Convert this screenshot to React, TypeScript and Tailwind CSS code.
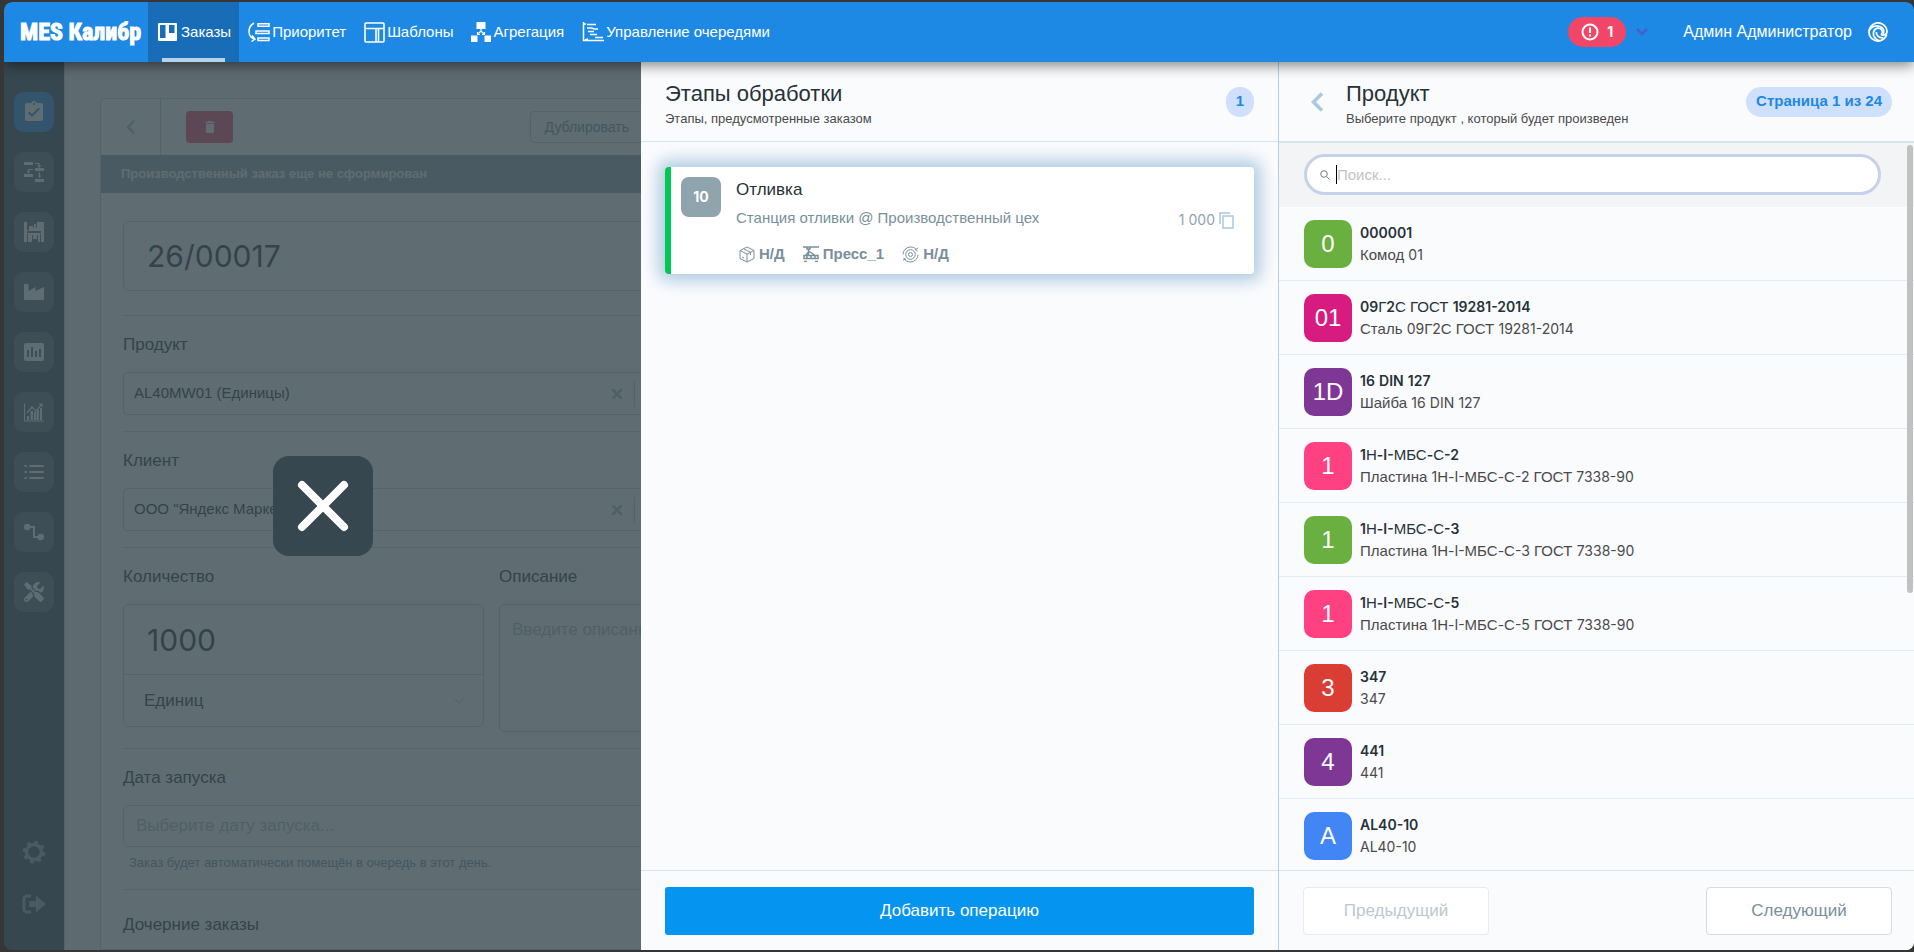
import type { ReactNode } from 'react';
import { FaTools } from 'react-icons/fa';
import { MdAssignmentTurnedIn, MdDelete } from 'react-icons/md';

const products = [
  { initials: '0', color: 'bg-[#69b040]', code: '000001', name: 'Комод 01' },
  { initials: '01', color: 'bg-[#d81b80]', code: '09Г2С ГОСТ 19281-2014', name: 'Сталь 09Г2С ГОСТ 19281-2014' },
  { initials: '1D', color: 'bg-[#7e3794]', code: '16 DIN 127', name: 'Шайба 16 DIN 127' },
  { initials: '1', color: 'bg-[#ff4081]', code: '1Н-I-МБС-С-2', name: 'Пластина 1Н-I-МБС-С-2 ГОСТ 7338-90' },
  { initials: '1', color: 'bg-[#69b040]', code: '1Н-I-МБС-С-3', name: 'Пластина 1Н-I-МБС-С-3 ГОСТ 7338-90' },
  { initials: '1', color: 'bg-[#ff4081]', code: '1Н-I-МБС-С-5', name: 'Пластина 1Н-I-МБС-С-5 ГОСТ 7338-90' },
  { initials: '3', color: 'bg-[#d93d33]', code: '347', name: '347' },
  { initials: '4', color: 'bg-[#7e3794]', code: '441', name: '441' },
  { initials: 'A', color: 'bg-[#4285f4]', code: 'AL40-10', name: 'AL40-10' }
];

const navItems = [
  {
    name: 'Приоритет',
    icon: (
      <svg viewBox="0 0 22 20" className="w-[22px] h-5" fill="none" stroke="currentColor" strokeWidth="1.5">
        <path d="M6 1C2.500 3 1 6 1 9c0 4 2 7 5.500 8M4 13.500 7 17l-3.500 2.500M10 1.800h11v2.400H10zM8 9h13v2.500H8zM10 16h11v2.500H10z" />
      </svg>
    )
  },
  {
    name: 'Шаблоны',
    icon: (
      <svg viewBox="0 0 21 21" className="w-[21px] h-[21px]" fill="none" stroke="currentColor" strokeWidth="1.600">
        <rect x="1" y="1" width="19" height="19" rx="1" />
        <path d="M1 6.500h19M12 6.500v13.500M14.500 6.500v13.500" />
      </svg>
    )
  },
  {
    name: 'Агрегация',
    icon: (
      <svg viewBox="0 0 20 20" className="w-5 h-5" fill="currentColor">
        <path d="M5.500 0h9v7h-9zM0 13.500h6.500V20H0zM13.500 13.500H20V20h-6.500z" />
        <path d="M10 7v2.500M10 9l-3.500 3.500M10 9l3.500 3.500M6.500 10v2.500H9M13.500 10v2.500H11" fill="none" stroke="currentColor" strokeWidth="1.200" />
      </svg>
    )
  },
  {
    name: 'Управление очередями',
    icon: (
      <svg viewBox="0 0 22 20" className="w-[22px] h-5" fill="none" stroke="currentColor" strokeWidth="1.500">
        <path d="M1.500 0v18.500H22M1.500 2H4M5 2.500h9M5 6h5M10 6l2 1h4M6 9.500h6M8 12.500h7M13 15.500h8M3 18l3-1" />
      </svg>
    )
  }
];

const sideItems = [
  { name: 'Заказы', icon: <MdAssignmentTurnedIn className="w-6 h-6" /> },
  {
    name: 'Процессы',
    icon: (
      <svg viewBox="0 0 20 20" className="w-5 h-5" fill="currentColor">
        <path d="M0 0h9v3H0zM11 6h9v3h-9zM0 12h9v3H0zM11 17h9v3h-9z" />
        <path d="M11 1.500h4v3M9 7.500H4.500V11M15.500 10v5" fill="none" stroke="currentColor" strokeWidth="1.200" />
        <path d="M13 3.500h4.500L15.200 6zM2.500 9.500h4L4.500 11.500zM13.500 13.500h4l-2 2.500z" />
      </svg>
    )
  },
  {
    name: 'Склад',
    icon: (
      <svg viewBox="0 0 20 20" className="w-5 h-5" fill="currentColor" fillRule="evenodd">
        <path d="M0 0h3v8h2V4h4v2h1V2h2v4h1V0h4v8h0V0h3v20h-3v-8h-1v8h-2v-7h-1v4H9v-4H8v7H4v-8H3v8H0zM3 9v2h14V9z" />
      </svg>
    )
  },
  {
    name: 'Производство',
    icon: (
      <svg viewBox="0 0 20 20" className="w-5 h-5" fill="currentColor">
        <path d="M0 3a1 1 0 0 1 1-1h2.500a1 1 0 0 1 1 1v6l7-4v4L20 5v12a1 1 0 0 1-1 1H1a1 1 0 0 1-1-1z" />
      </svg>
    )
  },
  {
    name: 'Показатели',
    icon: (
      <svg viewBox="0 0 20 20" className="w-5 h-5" fill="currentColor" fillRule="evenodd">
        <path d="M2 1h16a2 2 0 0 1 2 2v14a2 2 0 0 1-2 2H2a2 2 0 0 1-2-2V3a2 2 0 0 1 2-2zM3 8v7h2V8zM7 5v10h2V5zM11 9v6h2V9zM15 7v8h2V7z" />
      </svg>
    )
  },
  {
    name: 'Аналитика',
    icon: (
      <svg viewBox="0 0 20 20" className="w-5 h-5" fill="currentColor">
        <path d="M3 14h2v4H3zM6.500 9h2.500v9H6.500zM10 10h2.500v8H10zM13 8h2v10h-2zM16 6h2v12h-2z" />
        <path d="M.500 2v17H20M3 11l5-6 4 4 6-7M15 2h3v3" fill="none" stroke="currentColor" strokeWidth="1.200" />
      </svg>
    )
  },
  {
    name: 'Списки',
    icon: (
      <svg viewBox="0 0 20 20" className="w-5 h-5" fill="none" stroke="currentColor" strokeWidth="1.800" strokeLinecap="round">
        <path d="M1.200 4h1M1.200 10h1M1.200 16h1M6 4h13M6 10h13M6 16h13" />
      </svg>
    )
  },
  {
    name: 'Маршруты',
    icon: (
      <svg viewBox="0 0 20 20" className="w-5 h-5" fill="currentColor">
        <circle cx="3.200" cy="5" r="3.200" />
        <circle cx="16.800" cy="15" r="3.200" />
        <path d="M4 5h6v10h7" fill="none" stroke="currentColor" strokeWidth="2" />
      </svg>
    )
  },
  { name: 'Инструменты', icon: <FaTools className="w-5 h-5" /> }
];

const latin = /([A-Za-z0-9][A-Za-z0-9\-]*|-[A-Za-z0-9\-]*)/;

// Latin letters and digits use the brand face, Cyrillic falls back to the system one
function Mixed({ text, bold }: { text: string; bold?: boolean }) {
  return (
    <>
      {text.split(latin).map((part, i) =>
        i % 2 ? (
          <span key={i} className={bold ? "font-['Inter',sans-serif] text-sm font-semibold" : "font-['Inter',sans-serif] text-sm"}>
            {part}
          </span>
        ) : (
          part
        )
      )}
    </>
  );
}

function Chevron({ className }: { className: string }) {
  return (
    <svg viewBox="0 0 12 20" className={className} fill="none" stroke="currentColor" strokeWidth="3.600">
      <path d="M11 1.500 2.500 10l8.500 8.500" />
    </svg>
  );
}

function Section({ label, htmlFor, children }: { label: string; htmlFor: string; children: ReactNode }) {
  return (
    <div className="border-t border-[#c8dae6] pt-4 pb-4">
      <label htmlFor={htmlFor} className="block h-[26px] leading-[26px] text-[17px] mb-[14px]">{label}</label>
      {children}
    </div>
  );
}

function ClearableSelect({ id, value }: { id: string; value: string }) {
  return (
    <div className="flex items-center h-[43px] border border-[#b9d0e2] rounded">
      <select id={id} className="flex-1 appearance-none h-full px-[10px] text-[15px]">
        <option>{value}</option>
      </select>
      <button aria-label="Очистить" className="px-3 text-[#b0bec5]">
        <svg viewBox="0 0 10 10" className="w-[10px] h-[10px]" stroke="currentColor" strokeWidth="2.500">
          <path d="M0 0l10 10M10 0 0 10" />
        </svg>
      </button>
      <span className="w-px h-[26px] bg-[#b9d0e2]" />
      <svg viewBox="0 0 12 8" className="w-3 h-2 mx-[11px] text-[#b9d0e2]" fill="none" stroke="currentColor">
        <path d="M1 1l5 5 5-5" />
      </svg>
    </div>
  );
}

function TopBar() {
  return (
    <header className="relative z-20 flex items-stretch h-[60px] shrink-0 rounded-t-lg bg-[#1e88e5] text-white text-[15px] shadow-[0_3px_14px_rgba(0,0,0,0.5)]">
      <a href="#" className="flex items-center w-36 pl-4 whitespace-nowrap font-['Liberation_Sans_Narrow','Roboto_Condensed',sans-serif] font-bold text-2xl [-webkit-text-stroke:1px_white]">
        MES Калибр
      </a>
      <nav className="flex items-stretch">
        <a href="#" className="relative flex items-center gap-1 pl-[10px] pr-2 bg-[#186db6]">
          <svg viewBox="0 0 19 18" className="w-[19px] h-[18px]" fill="currentColor" fillRule="evenodd">
            <path d="M1 0h17a1 1 0 0 1 1 1v16a1 1 0 0 1-1 1H1a1 1 0 0 1-1-1V1a1 1 0 0 1 1-1zM2 2v13h5.500V2zM11 2v8h5.500V2z" />
          </svg>
          Заказы
          <span className="absolute bottom-0 left-[14px] right-[14px] h-1 bg-[#b9d2ec]" />
        </a>
        {navItems.map((item) => (
          <a key={item.name} href="#" className="flex items-center gap-[2px] px-[9px]">
            {item.icon}
            {item.name}
          </a>
        ))}
      </nav>
      <div className="flex items-center ml-auto pr-[26px]">
        <button className="flex items-center gap-2 h-[30px] px-[13px] rounded-full bg-[#f14668] font-bold font-['Inter',sans-serif] text-sm">
          <svg viewBox="0 0 18 18" className="w-[18px] h-[18px]" fill="none" stroke="currentColor" strokeWidth="2">
            <circle cx="9" cy="9" r="7.500" />
            <path d="M9 4.500v5.500M9 11.500v2" />
          </svg>
          1
        </button>
        <svg viewBox="0 0 12 8" className="w-3 h-2 ml-[10px] text-[#485fc7]" fill="none" stroke="currentColor" strokeWidth="2.500">
          <path d="M1 1l5 5 5-5" />
        </svg>
        <span className="ml-[35px] text-base">Админ Администратор</span>
        <svg viewBox="0 0 20 20" className="w-5 h-5 ml-4" fill="none" stroke="currentColor" strokeWidth="1.800">
          <path d="M18.600 12.800A9 9 0 1 1 19 9c.2 3-2 4.500-5.500 4" />
          <path d="M13 13c1.800-2 1.800-4.500 0-6C10.500 5 6.500 6.500 5.500 10c-.800 3.500 1.500 7.500 6 8.800" />
          <path d="M1.300 8.500C3 4.500 8 3 12 4.500s4.500 5 3 7.500" />
          <path d="M8.500 10c-.8 3 2 6.200 7 5.800" />
        </svg>
      </div>
    </header>
  );
}

function SideBar() {
  return (
    <aside className="flex flex-col items-center w-[61px] shrink-0 pt-[30px] pb-9 bg-[#37474f] border-r border-[#b9d0e2] text-white">
      <div className="flex flex-col gap-5">
        {sideItems.map((item, i) => (
          <button
            key={item.name}
            aria-label={item.name}
            className={`flex items-center justify-center w-10 h-10 rounded-[10px] ${i === 0 ? 'bg-[#1e88e5]' : 'bg-[#5b6a72]'}`}
          >
            {item.icon}
          </button>
        ))}
      </div>
      <div className="flex flex-col items-center gap-[30px] mt-auto text-[#90a4ae]">
        <button aria-label="Настройки">
          <svg viewBox="0 0 24 24" className="w-6 h-6" fill="none" stroke="currentColor">
            <circle cx="12" cy="12" r="7.500" strokeWidth="3.500" />
            <circle cx="12" cy="12" r="9.800" strokeWidth="3" strokeDasharray="3.848 3.848" />
          </svg>
        </button>
        <button aria-label="Выйти">
          <svg viewBox="0 0 24 20" className="w-6 h-5" fill="currentColor">
            <path d="M9 2H5a3 3 0 0 0-3 3v10a3 3 0 0 0 3 3h4" fill="none" stroke="currentColor" strokeWidth="3" />
            <path d="M7 7h7V1.500L24 10l-10 8.500V13H7z" />
          </svg>
        </button>
      </div>
    </aside>
  );
}

function OrderForm() {
  return (
    <main className="flex-1 min-w-0 overflow-hidden bg-[#f5f8fb] px-[35px] pt-9">
      <div className="w-1/3 min-h-full border border-[#b9d0e2] rounded-t bg-white">
        <div className="flex items-center h-14">
          <button aria-label="Назад" className="flex items-center justify-center w-[60px] h-full border-r border-[#b9d0e2] text-[#b0c8dc]">
            <Chevron className="w-[9px] h-4" />
          </button>
          <button aria-label="Удалить" className="flex items-center justify-center w-[47px] h-8 ml-[25px] rounded bg-[#f14668] text-white">
            <MdDelete className="w-4 h-4" />
          </button>
          <button className="h-8 ml-auto mr-12 px-[14px] border border-[#b9d0e2] rounded text-sm text-[#78909c]">Дублировать</button>
        </div>
        <div className="h-[38px] leading-[38px] pl-5 bg-[#90a4ae] text-white text-[13px] font-bold">
          Производственный заказ еще не сформирован
        </div>
        <div className="px-[22px] pt-7">
          <input
            aria-label="Номер заказа"
            defaultValue="26/00017"
            className="block w-full h-[70px] px-[23px] mb-6 border border-[#b9d0e2] rounded-md font-['Inter',sans-serif] text-[30px]"
          />
          <Section label="Продукт" htmlFor="product">
            <ClearableSelect id="product" value="AL40MW01 (Единицы)" />
          </Section>
          <Section label="Клиент" htmlFor="client">
            <ClearableSelect id="client" value={'ООО "Яндекс Маркет"'} />
          </Section>
          <div className="flex gap-[15px] pt-4 pb-4 border-t border-[#c8dae6]">
            <div className="w-[66%]">
              <label htmlFor="qty" className="block h-[26px] leading-[26px] text-[17px] mb-[14px]">Количество</label>
              <div className="border border-[#b9d0e2] rounded-md">
                <input id="qty" defaultValue="1000" className="block w-full h-[70px] px-[23px] border-b border-[#b9d0e2] font-['Inter',sans-serif] text-[30px]" />
                <div className="flex items-center h-[51px] pr-[18px]">
                  <select aria-label="Единица измерения" className="flex-1 appearance-none h-full px-5 text-[17px]">
                    <option>Единиц</option>
                  </select>
                  <svg viewBox="0 0 12 8" className="w-3 h-2 text-[#b9d0e2]" fill="none" stroke="currentColor">
                    <path d="M1 1l5 5 5-5" />
                  </svg>
                </div>
              </div>
            </div>
            <div className="flex-1 min-w-0">
              <label htmlFor="description" className="block h-[26px] leading-[26px] text-[17px] mb-[14px]">Описание</label>
              <textarea
                id="description"
                placeholder="Введите описание..."
                className="block w-full h-32 px-3 py-3 border border-[#b9d0e2] rounded-md resize-none whitespace-nowrap text-[17px] placeholder:text-[#b0bec5]"
              />
            </div>
          </div>
          <Section label="Дата запуска" htmlFor="date">
            <input
              id="date"
              placeholder="Выберите дату запуска..."
              className="block w-full h-[42px] px-3 border border-[#b9d0e2] rounded-md text-[17px] placeholder:text-[#b0bec5]"
            />
            <p className="mt-[6px] px-[6px] leading-5 text-[13px] text-[#78909c]">Заказ будет автоматически помещён в очередь в этот день.</p>
          </Section>
          <div className="border-t border-[#c8dae6] pt-[22px] leading-[26px] text-[17px]">Дочерние заказы</div>
        </div>
      </div>
    </main>
  );
}

function PanelHeader({ title, subtitle, badge }: { title: string; subtitle: string; badge: string }) {
  return (
    <>
      <div className="pt-[3px]">
        <h2 className="text-[22px] leading-7 text-[#263238]">{title}</h2>
        <p className="mt-[3px] text-[13px] leading-4 text-[#4a4a4a]">{subtitle}</p>
      </div>
      <span className="flex items-center justify-center h-[30px] ml-auto px-[10px] rounded-full bg-[#cfe0fc] text-[15px] font-bold text-[#1e88e5]">{badge}</span>
    </>
  );
}

function StagesPanel() {
  return (
    <section className="flex flex-col min-h-0 bg-[#fafbfd] border-r border-[#b5cfe3]">
      <div className="flex items-center h-20 shrink-0 px-6 border-b border-[#d6e4ee]">
        <PanelHeader title="Этапы обработки" subtitle="Этапы, предусмотренные заказом" badge="1" />
      </div>
      <div className="flex-1 min-h-0 px-6 pt-[25px]">
        <article className="flex h-[107px] pt-[10px] pl-[10px] pr-5 border-l-[6px] border-[#00c853] rounded bg-white shadow-[0_0_16px_7px_#b0cce2]">
          <span className="flex items-center justify-center w-10 h-10 shrink-0 rounded-lg bg-[#90a4ae] font-['Inter',sans-serif] text-sm font-bold text-white">10</span>
          <div className="ml-[15px]">
            <h3 className="leading-[26px] text-[17px] text-[#263238]">Отливка</h3>
            <p className="mt-[3px] leading-6 text-[15px] text-[#78909c]">Станция отливки @ Производственный цех</p>
            <div className="flex items-center gap-[18px] mt-3 pl-[3px] leading-6 text-[15px] font-bold text-[#78909c]">
              <span className="flex items-center gap-1">
                <svg viewBox="0 0 16 17" className="w-4 h-[17px]" fill="none" stroke="currentColor">
                  <path d="M8 1l7 3.500v8L8 16l-7-3.500v-8zM1 4.500 8 8l7-3.500M8 8v8M4.500 2.700l7 3.600V9M3 11l2 1" />
                </svg>
                Н/Д
              </span>
              <span className="flex items-center gap-1">
                <svg viewBox="0 0 16 16" className="w-4 h-4" fill="none" stroke="currentColor">
                  <path d="M0 1h16M4 1v2h3V1M5.500 3v6M5.500 5l6 4M3 9l2.500-3M1 9.500h14v3H1zM4 9.500v3M8 9.500v3M12 9.500v3M1 15.500h3M12 15.500h3" strokeWidth="1.500" />
                </svg>
                Пресс_1
              </span>
              <span className="flex items-center gap-1">
                <svg viewBox="0 0 17 17" className="w-[17px] h-[17px]" fill="none" stroke="currentColor">
                  <circle cx="8.500" cy="8.500" r="7.500" strokeDasharray="20 3.560" />
                  <circle cx="8.500" cy="8.500" r="4.800" />
                  <circle cx="8.500" cy="8.500" r="2" />
                  <path d="M1 14l3-1M13 4l3-2" />
                </svg>
                Н/Д
              </span>
            </div>
          </div>
          <div className="flex items-center gap-1 h-[86px] ml-auto text-[#90a4ae]">
            <span className="font-['Inter',sans-serif] text-sm">1 000</span>
            <button aria-label="Копировать" className="text-[#a9c8e2]">
              <svg viewBox="0 0 15 17" className="w-[15px] h-[17px]" fill="none" stroke="currentColor" strokeWidth="1.500">
                <path d="M4 4h10v12H4zM1 12V1h10" />
              </svg>
            </button>
          </div>
        </article>
      </div>
      <div className="flex items-center h-20 shrink-0 px-6 border-t border-[#d6e4ee]">
        <button className="w-full h-12 rounded-[3px] bg-[#0594f0] text-[17px] text-white">Добавить операцию</button>
      </div>
    </section>
  );
}

function ProductPanel() {
  return (
    <section className="flex flex-col min-h-0 bg-[#fafbfd]">
      <div className="flex items-center h-20 shrink-0 pl-8 pr-[22px] border-b border-[#d6e4ee]">
        <button aria-label="Назад" className="mr-[23px] text-[#a9c8e2]">
          <Chevron className="w-3 h-5" />
        </button>
        <PanelHeader title="Продукт" subtitle="Выберите продукт , который будет произведен" badge="Страница 1 из 24" />
      </div>
      <div className="relative flex-1 min-h-0 overflow-hidden border-t border-[#d6e4ee]">
        <div className="h-16 pt-[11px] pl-[25px] pr-[33px] bg-[#f3f4f6]">
          <div className="flex items-center h-[41px] pl-[13px] border-[3px] border-[#c6d1ea] rounded-full bg-white">
            <svg viewBox="0 0 10 10" className="w-[10px] h-[10px] text-[#7a7a7a]" fill="none" stroke="currentColor">
              <circle cx="4" cy="4" r="3.300" />
              <path d="M6.500 6.500 9.500 9.500" />
            </svg>
            <span className="w-px h-[19px] ml-[6px] bg-black" />
            <input aria-label="Поиск" placeholder="Поиск..." className="flex-1 h-full text-[15px] outline-none placeholder:text-[#c3c3c3]" />
          </div>
        </div>
        <ul>
          {products.map((product) => (
            <li key={product.code} className="border-b border-[#e2ecf5]">
              <button className="flex items-center gap-2 w-full h-[73px] pl-[25px] text-left text-[15px]">
                <span className={`flex items-center justify-center w-12 h-12 rounded-[10px] text-2xl text-white ${product.color}`}>
                  {product.initials}
                </span>
                <span>
                  <span className="block leading-[22px] text-[#263238]"><Mixed text={product.code} bold /></span>
                  <span className="block leading-[22px] text-[#4a4a4a]"><Mixed text={product.name} /></span>
                </span>
              </button>
            </li>
          ))}
        </ul>
        <span className="absolute top-[2px] right-px w-[6px] h-[448px] rounded-full bg-[#c1c1c1]" />
      </div>
      <div className="flex items-center justify-between h-20 shrink-0 pl-6 pr-[22px] border-t border-[#d6e4ee] text-[17px]">
        <button disabled className="w-[186px] h-12 border border-[#ebebeb] rounded bg-white text-[#bcc8ce]">Предыдущий</button>
        <button className="w-[186px] h-12 border border-[#dbdbdb] rounded bg-white text-[#78909c]">Следующий</button>
      </div>
    </section>
  );
}

export default function App() {
  return (
    <div className="h-screen pt-[2px] pl-1 pb-[2px] bg-[#363636] font-['Liberation_Sans',Arial,sans-serif] text-[#263238]">
      <div className="flex flex-col h-full overflow-hidden rounded-lg">
        <TopBar />
        <div className="relative flex flex-1 min-h-0">
          <SideBar />
          <OrderForm />
          {/* Drawer over the order form */}
          <div className="absolute inset-0 grid grid-cols-[637fr_638fr_635fr] grid-rows-1">
            <div className="flex items-center justify-center bg-[#37474f]/80">
              <button aria-label="Закрыть" className="flex items-center justify-center w-[100px] h-[100px] rounded-2xl bg-[#37474f] text-white">
                <svg viewBox="0 0 52 52" className="w-[52px] h-[52px]" fill="none" stroke="currentColor" strokeWidth="8" strokeLinecap="round">
                  <path d="M5 5l42 42M47 5 5 47" />
                </svg>
              </button>
            </div>
            <StagesPanel />
            <ProductPanel />
          </div>
        </div>
      </div>
    </div>
  );
}
